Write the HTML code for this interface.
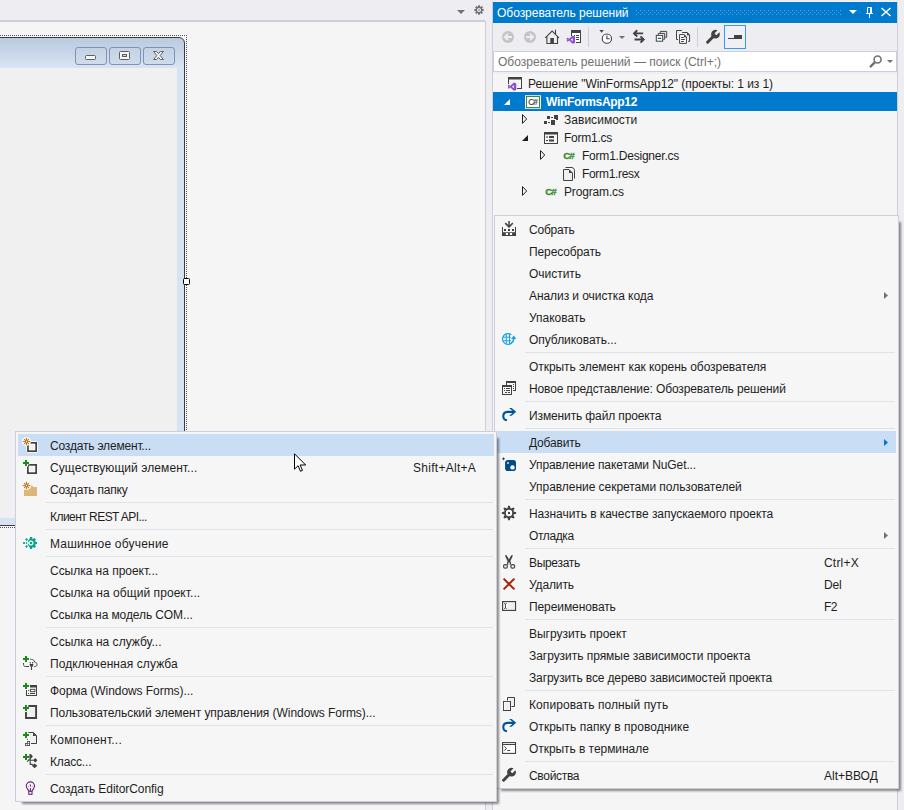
<!DOCTYPE html>
<html><head><meta charset="utf-8"><title>VS</title><style>
html,body{margin:0;padding:0}
body{width:904px;height:810px;overflow:hidden;background:#EEEEF2;position:relative;font-family:"Liberation Sans",sans-serif;font-size:12px;color:#1E1E1E}
.a{position:absolute}
.ic{position:absolute;overflow:visible}
.menu{position:absolute;box-sizing:border-box;background:#F6F6F6;border:1px solid #CCCEDB;}
.sh{position:absolute;background:rgba(0,0,0,.44);filter:blur(.8px)}
.menu>*{margin-left:-1px;margin-top:-1px}
.mi{position:absolute;height:22px;line-height:22px;white-space:nowrap}
.hl{position:absolute;height:22px;background:#C9DEF5}
.sep{position:absolute;height:1px;background:#E0E3E6}
.t,.tb{display:inline-block;white-space:nowrap}
.tb{font-weight:bold}
</style></head><body>
<!-- document well -->
<div class="a" style="left:0;top:20px;width:485px;height:2px;background:#CCCEDB"></div>
<div class="a" style="left:0;top:22px;width:485px;height:788px;background:#F5F5F5"></div>
<div class="a" style="left:485px;top:21px;width:1px;height:789px;background:#CCCEDB"></div>
<svg class="ic" style="left:457px;top:10px" width="8" height="4" viewBox="0 0 8 4"><path fill="#717171" d="M0 0h8L4 4z"/></svg>
<svg class="ic" style="left:474px;top:5px" width="10" height="10" viewBox="0 0 16 16"><path fill="#717171" d="M6.25 2.89L6.51 0.55L9.49 0.55L9.75 2.89L10.38 3.15L12.22 1.68L14.32 3.78L12.85 5.62L13.11 6.25L15.45 6.51L15.45 9.49L13.11 9.75L12.85 10.38L14.32 12.22L12.22 14.32L10.38 12.85L9.75 13.11L9.49 15.45L6.51 15.45L6.25 13.11L5.62 12.85L3.78 14.32L1.68 12.22L3.15 10.38L2.89 9.75L0.55 9.49L0.55 6.51L2.89 6.25L3.15 5.62L1.68 3.78L3.78 1.68L5.62 3.15z"/><circle cx="8" cy="8" r="3.300" fill="#EEEEF2"/><circle cx="8" cy="8" r="1.300" fill="#717171"/></svg>
<!-- designer form -->
<div class="a" style="left:-10px;top:35px;width:197px;height:493px;border:1px dotted #555;box-sizing:border-box"></div>
<div class="a" style="left:-10px;top:37px;width:195px;height:489px;box-sizing:border-box;border:1px solid #3C3C3C;border-radius:6px 6px 1px 1px;background:linear-gradient(#BACBDF 0,#C7D6E8 14px,#D9E5F4 30px,#D7E3F3 31px)"></div>
<div class="a" style="left:-10px;top:68px;width:187px;height:450px;background:#F0F0F0"></div>
<div class="a btn" style="left:75px;top:47px"></div><div class="a btn" style="left:109px;top:47px"></div><div class="a btn" style="left:143px;top:47px"></div>
<style>.btn{width:32px;height:18px;box-sizing:border-box;border:1px solid #8391AE;border-radius:3px;background:linear-gradient(#C3D2E5,#CFDCEC)}</style>
<div class="a" style="left:85px;top:55px;width:11px;height:5px;box-sizing:border-box;border:1px solid #5E5E5E;background:#F6F6F6;border-radius:1.500px"></div>
<div class="a" style="left:119px;top:51px;width:11px;height:9px;box-sizing:border-box;border:1px solid #5E5E5E;background:#F6F6F6;border-radius:1.500px"></div>
<div class="a" style="left:122px;top:54px;width:5px;height:3px;box-sizing:border-box;border:1px solid #5E5E5E;background:#C9D6E6"></div>
<svg class="ic" style="left:153px;top:51px" width="11" height="9" viewBox="0 0 11 9"><path fill="#F6F6F6" stroke="#5E5E5E" stroke-width="1" stroke-linejoin="round" d="M.6 .5H3.600L5.500 2.700 7.400 .5H10.400L7.200 4.500 10.400 8.500H7.400L5.500 6.300 3.600 8.500H.6L3.800 4.500z"/></svg>
<div class="a" style="left:183px;top:278px;width:7px;height:7px;box-sizing:border-box;border:1px solid #000;background:#fff;border-radius:1.500px"></div>
<!-- solution explorer -->
<div class="a" style="left:492px;top:1px;width:406px;height:809px;background:#F5F5F5;border-left:1px solid #CCCEDB;border-right:1px solid #CCCEDB;box-sizing:border-box"></div>
<div class="a" style="left:493px;top:23px;width:404px;height:51px;background:#EEEEF2"></div>
<div class="a" style="left:493px;top:2px;width:404px;height:21px;background:#007ACC"></div>
<svg class="ic" style="left:0;top:0" width="904" height="24" viewBox="0 0 904 24"><path fill="#59A8DE" d="M636 10h1v1h-1zM640 10h1v1h-1zM644 10h1v1h-1zM648 10h1v1h-1zM652 10h1v1h-1zM656 10h1v1h-1zM660 10h1v1h-1zM664 10h1v1h-1zM668 10h1v1h-1zM672 10h1v1h-1zM676 10h1v1h-1zM680 10h1v1h-1zM684 10h1v1h-1zM688 10h1v1h-1zM692 10h1v1h-1zM696 10h1v1h-1zM700 10h1v1h-1zM704 10h1v1h-1zM708 10h1v1h-1zM712 10h1v1h-1zM716 10h1v1h-1zM720 10h1v1h-1zM724 10h1v1h-1zM728 10h1v1h-1zM732 10h1v1h-1zM736 10h1v1h-1zM740 10h1v1h-1zM744 10h1v1h-1zM748 10h1v1h-1zM752 10h1v1h-1zM756 10h1v1h-1zM760 10h1v1h-1zM764 10h1v1h-1zM768 10h1v1h-1zM772 10h1v1h-1zM776 10h1v1h-1zM780 10h1v1h-1zM784 10h1v1h-1zM788 10h1v1h-1zM792 10h1v1h-1zM796 10h1v1h-1zM800 10h1v1h-1zM804 10h1v1h-1zM808 10h1v1h-1zM812 10h1v1h-1zM816 10h1v1h-1zM820 10h1v1h-1zM824 10h1v1h-1zM828 10h1v1h-1zM832 10h1v1h-1zM836 10h1v1h-1zM840 10h1v1h-1zM638 12h1v1h-1zM642 12h1v1h-1zM646 12h1v1h-1zM650 12h1v1h-1zM654 12h1v1h-1zM658 12h1v1h-1zM662 12h1v1h-1zM666 12h1v1h-1zM670 12h1v1h-1zM674 12h1v1h-1zM678 12h1v1h-1zM682 12h1v1h-1zM686 12h1v1h-1zM690 12h1v1h-1zM694 12h1v1h-1zM698 12h1v1h-1zM702 12h1v1h-1zM706 12h1v1h-1zM710 12h1v1h-1zM714 12h1v1h-1zM718 12h1v1h-1zM722 12h1v1h-1zM726 12h1v1h-1zM730 12h1v1h-1zM734 12h1v1h-1zM738 12h1v1h-1zM742 12h1v1h-1zM746 12h1v1h-1zM750 12h1v1h-1zM754 12h1v1h-1zM758 12h1v1h-1zM762 12h1v1h-1zM766 12h1v1h-1zM770 12h1v1h-1zM774 12h1v1h-1zM778 12h1v1h-1zM782 12h1v1h-1zM786 12h1v1h-1zM790 12h1v1h-1zM794 12h1v1h-1zM798 12h1v1h-1zM802 12h1v1h-1zM806 12h1v1h-1zM810 12h1v1h-1zM814 12h1v1h-1zM818 12h1v1h-1zM822 12h1v1h-1zM826 12h1v1h-1zM830 12h1v1h-1zM834 12h1v1h-1zM838 12h1v1h-1zM636 14h1v1h-1zM640 14h1v1h-1zM644 14h1v1h-1zM648 14h1v1h-1zM652 14h1v1h-1zM656 14h1v1h-1zM660 14h1v1h-1zM664 14h1v1h-1zM668 14h1v1h-1zM672 14h1v1h-1zM676 14h1v1h-1zM680 14h1v1h-1zM684 14h1v1h-1zM688 14h1v1h-1zM692 14h1v1h-1zM696 14h1v1h-1zM700 14h1v1h-1zM704 14h1v1h-1zM708 14h1v1h-1zM712 14h1v1h-1zM716 14h1v1h-1zM720 14h1v1h-1zM724 14h1v1h-1zM728 14h1v1h-1zM732 14h1v1h-1zM736 14h1v1h-1zM740 14h1v1h-1zM744 14h1v1h-1zM748 14h1v1h-1zM752 14h1v1h-1zM756 14h1v1h-1zM760 14h1v1h-1zM764 14h1v1h-1zM768 14h1v1h-1zM772 14h1v1h-1zM776 14h1v1h-1zM780 14h1v1h-1zM784 14h1v1h-1zM788 14h1v1h-1zM792 14h1v1h-1zM796 14h1v1h-1zM800 14h1v1h-1zM804 14h1v1h-1zM808 14h1v1h-1zM812 14h1v1h-1zM816 14h1v1h-1zM820 14h1v1h-1zM824 14h1v1h-1zM828 14h1v1h-1zM832 14h1v1h-1zM836 14h1v1h-1zM840 14h1v1h-1z"/></svg>
<div class="mi" style="left:497px;top:3px;height:21px;line-height:21px;color:#fff"><span class="t" style="letter-spacing:-0.032px;">Обозреватель решений</span></div>
<svg class="ic" style="left:849px;top:10px" width="8" height="4" viewBox="0 0 8 4"><path fill="#fff" d="M0 0h8L4 4z"/></svg>
<svg class="ic" style="left:866px;top:7px" width="7" height="11" viewBox="0 0 7 11"><path fill="none" stroke="#fff" d="M1.500 6.500v-6h4v6M0 6.500h7M3.500 7v4"/><path stroke="#fff" d="M4.500 .5v6"/></svg>
<svg class="ic" style="left:881px;top:8px" width="10" height="8" viewBox="0 0 10 8"><path fill="none" stroke="#fff" stroke-width="1.500" d="M.5 0l9 8M9.500 0l-9 8"/></svg>
<svg class="ic" style="left:500px;top:29px" width="16" height="16" viewBox="0 0 16 16"><circle cx="8" cy="8" r="6" fill="#C4C4C4"/><path fill="none" stroke="#EEEEF2" stroke-width="1.900" d="M8 4.800L4.800 8l3.200 3.200M5.200 8H12"/></svg><svg class="ic" style="left:522px;top:29px" width="16" height="16" viewBox="0 0 16 16"><circle cx="8" cy="8" r="6" fill="#C4C4C4"/><path fill="none" stroke="#EEEEF2" stroke-width="1.900" d="M8 4.800L11.200 8l-3.200 3.200M10.800 8H4"/></svg><svg class="ic" style="left:544px;top:29px" width="16" height="16" viewBox="0 0 16 16"><path fill="none" stroke="#424242" stroke-width="1.100" d="M1.300 8.900L8.100 2l6.900 6.900M2.900 7.800v6.700H13.500V7.800M11.500 5V.8"/><rect x="6.300" y="9" width="3.600" height="5.500" fill="#424242"/></svg><svg class="ic" style="left:566px;top:30px" width="16" height="16" viewBox="0 0 16 16"><path fill="#fff" d="M6 1h9v12H6z"/><path fill="#424242" d="M5 0h10v13h-5v-1h4V3H6v3H5z"/><g fill="#424242"><rect x="8" y="5" width="1" height="1"/><rect x="10" y="5" width="3" height="1"/><rect x="8" y="7" width="1" height="1"/><rect x="10" y="7" width="3" height="1"/><rect x="10" y="9" width="3" height="1"/></g><path transform="translate(0.2,5) scale(0.59)" fill="#8A4DD1" fill-rule="evenodd" d="M11 1L15 2.500V13.500L11 15 5 9.500 2.500 11.500 1 10.800V5.200L2.500 4.500 5 6.500zM11 5.200L7.700 8 11 10.800zM2.600 6.600V9.400L4 8z"/></svg><div style="position:absolute;left:588px;top:27px;width:1px;height:20px;background:#CCCEDB"></div><svg class="ic" style="left:597px;top:29px" width="16" height="16" viewBox="0 0 16 16"><path fill="#424242" d="M2.400 1.100h4.400L4.600 3.800z"/><circle cx="9.900" cy="9.650" r="4.650" fill="#fff" stroke="#424242" stroke-width="1.100"/><path fill="none" stroke="#424242" stroke-width="1.100" d="M9.900 6.500v3.300h2.800"/></svg><svg class="ic" style="left:619px;top:36px" width="6" height="3" viewBox="0 0 6 3"><path fill="#717171" d="M0 0h6L3 3z"/></svg><svg class="ic" style="left:631px;top:29px" width="16" height="16" viewBox="0 0 16 16"><path fill="none" stroke="#424242" stroke-width="1.900" d="M12.200 4.400H3.800M6.200 1.300L3 4.400l3.200 3.100M3.500 10.500h8.400M9.500 7.400l3.200 3.100-3.200 3.100"/></svg><svg class="ic" style="left:653px;top:29px" width="16" height="16" viewBox="0 0 16 16"><path fill="none" stroke="#424242" d="M7.300 3.900V2.400H13.700V8.200H12.200M5.300 5.900V4.400H11.700V10.200H10.200"/><rect x="3.300" y="6.400" width="6.400" height="5.800" fill="#fff" stroke="#424242"/><rect x="4.800" y="8.800" width="3.400" height="1.100" fill="#00539C"/></svg><svg class="ic" style="left:675px;top:29px" width="16" height="16" viewBox="0 0 16 16"><path fill="none" stroke="#424242" d="M6.800 1.500H1.500v9H3M7.100 3.500H12.300L14.600 6V12.400H13.100"/><path fill="#fff" stroke="#424242" d="M4.600 5.600H9.300L11.400 7.900V14.400H4.600z"/><path fill="#424242" d="M6.100 8h2.800v1H6.100zM6.100 10h3.700v1H6.100zM6.100 12h2.800v1H6.100zM9 5.400V8.200h2.800zM12 3.300V6.200h2.800z"/></svg><div style="position:absolute;left:697px;top:27px;width:1px;height:20px;background:#CCCEDB"></div><svg class="ic" style="left:705px;top:29px" width="16" height="16" viewBox="0 0 16 16"><path fill="#424242" d="M12.550 1.310A4.400 4.400 0 1 0 14.390 3.150L11.280 6.260 9.440 4.420z"/><path stroke="#424242" stroke-width="3" stroke-linecap="round" d="M8.500 7.200L2.600 13.200"/></svg><div style="position:absolute;left:724px;top:25px;width:20px;height:22px;border:1px solid #3399FF;background:#F0F0F4"></div><svg class="ic" style="left:727px;top:29px" width="16" height="16" viewBox="0 0 16 16"><path fill="#424242" d="M1 9h6V6h8v4H1z"/></svg>
<div class="a" style="left:493px;top:51px;width:404px;height:21px;box-sizing:border-box;border:1px solid #CCCEDB;background:#fff"></div>
<div class="mi" style="left:498px;top:52px;height:21px;line-height:21px;color:#717171"><span class="t" style="letter-spacing:0.022px;">Обозреватель решений — поиск (Ctrl+;)</span></div>
<svg class="ic" style="left:868px;top:54px" width="14" height="14" viewBox="0 0 14 14"><circle cx="9.600" cy="5.500" r="3.500" fill="none" stroke="#717171" stroke-width="1.600"/><path stroke="#717171" stroke-width="2.300" d="M7 8.100L2 13.100"/></svg>
<svg class="ic" style="left:887px;top:60px" width="6" height="3" viewBox="0 0 6 3"><path fill="#717171" d="M0 0h6L3 3z"/></svg>
<svg class="ic" style="left:508px;top:75px" width="16" height="16" viewBox="0 0 16 16"><path fill="#424242" d="M0 2h14v12H9v-1h4V4.500H1V9H0z"/><path transform="translate(-0.6,7) scale(0.59)" fill="#8A4DD1" fill-rule="evenodd" d="M11 1L15 2.500V13.500L11 15 5 9.500 2.500 11.500 1 10.800V5.200L2.500 4.500 5 6.500zM11 5.200L7.700 8 11 10.800zM2.600 6.600V9.400L4 8z"/></svg><div class="mi" style="top:73px;left:528px;color:#1E1E1E"><span class="t" style="letter-spacing:-0.070px;">Решение "WinFormsApp12" (проекты: 1 из 1)</span></div><div style="position:absolute;left:493px;top:92px;width:404px;height:19px;background:#007ACC"></div><svg class="ic" style="left:504px;top:99px" width="6" height="6" viewBox="0 0 6 6"><path fill="#fff" d="M6 0v6H0z"/></svg><svg class="ic" style="left:525px;top:93px" width="16" height="16" viewBox="0 0 16 16"><rect x="0" y="2.200" width="16" height="13.600" fill="#F6F6F6"/><rect x="1.500" y="3.500" width="13" height="11" fill="#fff" stroke="#388A34"/><text x="8.100" y="12" font-family="Liberation Sans" font-size="8.300" text-anchor="middle" fill="#424242" stroke="#424242" stroke-width=".2" textLength="9.500">C#</text></svg><div class="mi" style="top:91px;left:546px;color:#fff"><span class="tb" style="letter-spacing:-0.325px;">WinFormsApp12</span></div><svg class="ic" style="left:522px;top:114px" width="6" height="10" viewBox="0 0 6 10"><path fill="none" stroke="#1E1E1E" stroke-width="1" d="M.5 .6L4.700 5 .5 9.400z"/></svg><svg class="ic" style="left:543px;top:111px" width="16" height="16" viewBox="0 0 16 16"><g fill="#424242"><rect x="11" y="4" width="4" height="4"/><rect x="13" y="8" width="2" height="1"/><rect x="4" y="5" width="3" height="3"/><rect x="8" y="6" width="2" height="1"/><rect x="8" y="9" width="4" height="5"/><rect x="1" y="10" width="3" height="3"/><rect x="5" y="11" width="2" height="1"/></g></svg><div class="mi" style="top:109px;left:564px;color:#1E1E1E"><span class="t" style="letter-spacing:0.030px;">Зависимости</span></div><svg class="ic" style="left:522px;top:135px" width="6" height="6" viewBox="0 0 6 6"><path fill="#1E1E1E" d="M6 0v6H0z"/></svg><svg class="ic" style="left:543px;top:129px" width="16" height="16" viewBox="0 0 16 16"><path fill="#424242" d="M1 3h14v12H1zm1 2.500v8.500h12V5.500z"/><g fill="#424242"><rect x="3" y="7.500" width="2" height="1"/><rect x="6" y="7" width="5" height="2"/><rect x="3" y="11" width="2" height="1"/><rect x="6" y="10.500" width="5" height="2"/></g></svg><div class="mi" style="top:127px;left:564px;color:#1E1E1E"><span class="t" style="letter-spacing:-0.257px;">Form1.cs</span></div><svg class="ic" style="left:540px;top:150px" width="6" height="10" viewBox="0 0 6 10"><path fill="none" stroke="#1E1E1E" stroke-width="1" d="M.5 .6L4.700 5 .5 9.400z"/></svg><svg class="ic" style="left:561px;top:147px" width="16" height="16" viewBox="0 0 16 16"><text x="8" y="12.100" font-family="Liberation Sans" font-size="9.800" font-weight="bold" text-anchor="middle" fill="#388A34" stroke="#388A34" stroke-width=".3" textLength="11.500">C#</text></svg><div class="mi" style="top:145px;left:582px;color:#1E1E1E"><span class="t" style="letter-spacing:-0.212px;">Form1.Designer.cs</span></div><svg class="ic" style="left:561px;top:165px" width="16" height="16" viewBox="0 0 16 16"><path fill="none" stroke="#424242" d="M4.500 2.500h6.500q2.500 .5 2.500 3V13.500"/><path fill="#F0EFF1" stroke="#424242" d="M2.500 4.500h5.500L11.500 8v7.500h-9z"/><path fill="#424242" d="M8 4.500V8h3.500z"/></svg><div class="mi" style="top:163px;left:582px;color:#1E1E1E"><span class="t" style="letter-spacing:-0.322px;">Form1.resx</span></div><svg class="ic" style="left:522px;top:186px" width="6" height="10" viewBox="0 0 6 10"><path fill="none" stroke="#1E1E1E" stroke-width="1" d="M.5 .6L4.700 5 .5 9.400z"/></svg><svg class="ic" style="left:543px;top:183px" width="16" height="16" viewBox="0 0 16 16"><text x="8" y="12.100" font-family="Liberation Sans" font-size="9.800" font-weight="bold" text-anchor="middle" fill="#388A34" stroke="#388A34" stroke-width=".3" textLength="11.500">C#</text></svg><div class="mi" style="top:181px;left:564px;color:#1E1E1E"><span class="t" style="letter-spacing:-0.156px;">Program.cs</span></div>
<!-- menus -->
<div class="sh" style="left:501px;top:222px;width:400.1px;height:569.1px"></div><div class="menu" style="left:494px;top:215px;width:405px;height:574px"><svg class="ic" style="left:7px;top:6px" width="16" height="16" viewBox="0 0 16 16"><g fill="#424242"><path d="M7.3 0h1.5v4.1l2.5-2.5 1 1.1L8 7 3.7 2.7l1-1.1 2.6 2.5z"/><path d="M1 6h1v5.3h12V6h1v9H1z"/><rect x="3" y="8" width="2" height="2"/><rect x="7" y="8" width="2" height="2"/><rect x="11" y="8" width="2" height="2"/></g><rect x="4.8" y="12" width="2.2" height="2" fill="#fff"/><rect x="8.9" y="12" width="2.2" height="2" fill="#fff"/></svg><div class="mi" style="top:4px;left:35px"><span class="t" style="letter-spacing:-0.217px;">Собрать</span></div><div class="mi" style="top:26px;left:35px"><span class="t" style="letter-spacing:-0.110px;">Пересобрать</span></div><div class="mi" style="top:48px;left:35px"><span class="t" style="letter-spacing:-0.029px;">Очистить</span></div><div class="mi" style="top:70px;left:35px"><span class="t" style="letter-spacing:-0.070px;">Анализ и очистка кода</span></div><svg class="ic" style="left:390px;top:77px" width="4" height="7" viewBox="0 0 4 7"><path fill="#717171" d="M0 0l4 3.500-4 3.500z"/></svg><div class="mi" style="top:92px;left:35px"><span class="t" style="letter-spacing:-0.013px;">Упаковать</span></div><svg class="ic" style="left:7px;top:116px" width="16" height="16" viewBox="0 0 16 16"><g fill="none" stroke="#1BA1E2"><path stroke-width="1.200" d="M10.300 3.800A5.400 5.400 0 1 0 10.600 12"/><path stroke-width="1" d="M5.300 3.200v9.600M8.500 3.200v9.600M1.800 6.200h8M1.800 9.800h8.200"/><path stroke-width="1.500" d="M12.700 7.500c0 2.200-.9 3.900-2.700 4.900"/></g><path fill="#1BA1E2" d="M12.800 4.500l2.600 3.600h-5.400z"/></svg><div class="mi" style="top:114px;left:35px"><span class="t" style="letter-spacing:-0.043px;">Опубликовать...</span></div><div class="sep" style="top:137px;left:31px;width:370px"></div><div class="mi" style="top:141px;left:35px"><span class="t" style="letter-spacing:-0.058px;">Открыть элемент как корень обозревателя</span></div><svg class="ic" style="left:7px;top:165px" width="16" height="16" viewBox="0 0 16 16"><g fill="#424242"><path d="M5 1h10v10h-3v-1h2V3H6v2H5z"/><path d="M1 5h10v10H1zm1 2v7h8V7z"/><rect x="3" y="8" width="1" height="1"/><rect x="5" y="8" width="4" height="1"/><rect x="3" y="10" width="1" height="1"/><rect x="5" y="10" width="4" height="1"/><rect x="4" y="12" width="2" height="1"/><rect x="7" y="12" width="2" height="1"/><rect x="12" y="4" width="1" height="1"/><rect x="12" y="6" width="1" height="1"/><rect x="12" y="8" width="1" height="1"/></g></svg><div class="mi" style="top:163px;left:35px"><span class="t" style="letter-spacing:-0.115px;">Новое представление: Обозреватель решений</span></div><div class="sep" style="top:186px;left:31px;width:370px"></div><svg class="ic" style="left:7px;top:192px" width="16" height="16" viewBox="0 0 16 16"><path fill="none" stroke="#00539C" stroke-width="2.100" d="M6 13.300A4.250 4.250 0 0 1 6.200 4.850H12"/><path fill="#00539C" d="M8.100 1h2.500L15.200 4.850 10.600 8.700H8.100L11.500 5.900v-2.100z"/></svg><div class="mi" style="top:190px;left:35px"><span class="t" style="letter-spacing:-0.125px;">Изменить файл проекта</span></div><div class="sep" style="top:213px;left:31px;width:370px"></div><div class="hl" style="top:216px;left:3px;width:399px"></div><div class="mi" style="top:217px;left:35px"><span class="t" style="letter-spacing:-0.171px;">Добавить</span></div><svg class="ic" style="left:390px;top:224px" width="4" height="7" viewBox="0 0 4 7"><path fill="#007ACC" d="M0 0l4 3.500-4 3.500z"/></svg><svg class="ic" style="left:7px;top:241px" width="16" height="16" viewBox="0 0 16 16"><rect x="4.100" y="4.100" width="10.900" height="10.900" rx="2.800" fill="#004A85"/><rect x="6" y="6" width="2" height="2" fill="#9CB9D6"/><circle cx="11.500" cy="11.400" r="2.200" fill="#fff"/><path fill="#004A85" d="M2.500 1L3.100 2.200 4.300 2.800 3.100 3.400 2.500 4.600 1.900 3.400.7 2.800 1.900 2.200z"/></svg><div class="mi" style="top:239px;left:35px"><span class="t" style="letter-spacing:-0.100px;">Управление пакетами NuGet...</span></div><div class="mi" style="top:261px;left:35px"><span class="t" style="letter-spacing:-0.042px;">Управление секретами пользователей</span></div><div class="sep" style="top:284px;left:31px;width:370px"></div><svg class="ic" style="left:7px;top:290px" width="16" height="16" viewBox="0 0 16 16"><path fill="#424242" d="M6.41 3.36L7.24 0.84L8.76 0.84L9.59 3.36L10.16 3.60L12.52 2.40L13.60 3.48L12.40 5.84L12.64 6.41L15.16 7.24L15.16 8.76L12.64 9.59L12.40 10.16L13.60 12.52L12.52 13.60L10.16 12.40L9.59 12.64L8.76 15.16L7.24 15.16L6.41 12.64L5.84 12.40L3.48 13.60L2.40 12.52L3.60 10.16L3.36 9.59L0.84 8.76L0.84 7.24L3.36 6.41L3.60 5.84L2.40 3.48L3.48 2.40L5.84 3.60z"/><circle cx="8" cy="8" r="3.200" fill="#fff"/><circle cx="8" cy="8" r="1.200" fill="#424242"/></svg><div class="mi" style="top:288px;left:35px"><span class="t" style="letter-spacing:-0.057px;">Назначить в качестве запускаемого проекта</span></div><div class="mi" style="top:310px;left:35px"><span class="t" style="letter-spacing:-0.383px;">Отладка</span></div><svg class="ic" style="left:390px;top:317px" width="4" height="7" viewBox="0 0 4 7"><path fill="#717171" d="M0 0l4 3.500-4 3.500z"/></svg><div class="sep" style="top:333px;left:31px;width:370px"></div><svg class="ic" style="left:7px;top:339px" width="16" height="16" viewBox="0 0 16 16"><path fill="#424242" d="M4.10 1.00L5.30 1.00L6.80 3.30L8.20 6.00L8.80 7.90L7.00 7.90L6.00 6.00L4.70 3.30z"/><path fill="#424242" d="M11.80 1.00L10.60 1.00L9.10 3.30L7.70 6.00L7.10 7.90L8.90 7.90L9.90 6.00L11.20 3.30z"/><path fill="#424242" fill-rule="evenodd" d="M6.100 7.500H9.900V10.800H6.100zM7.300 8.400V10.800H8.700V8.400z"/><g fill="none" stroke="#424242" stroke-width="1.200"><rect x="2.600" y="10.600" width="3.700" height="3.600" rx="1.500"/><rect x="9.900" y="10.600" width="3.700" height="3.600" rx="1.500"/></g></svg><div class="mi" style="top:337px;left:35px"><span class="t" style="letter-spacing:-0.314px;">Вырезать</span></div><div class="mi" style="top:337px;left:330px"><span class="t" style="letter-spacing:0.200px;">Ctrl+X</span></div><svg class="ic" style="left:7px;top:361px" width="16" height="16" viewBox="0 0 16 16"><path fill="none" stroke="#A1260D" stroke-width="2" d="M2.600 2.600l10.800 10.800M13.400 2.600L2.600 13.400"/></svg><div class="mi" style="top:359px;left:35px"><span class="t" style="letter-spacing:-0.133px;">Удалить</span></div><div class="mi" style="top:359px;left:330px"><span class="t" style="letter-spacing:-0.150px;">Del</span></div><svg class="ic" style="left:7px;top:383px" width="16" height="16" viewBox="0 0 16 16"><rect x="1.600" y="3.600" width="12.900" height="8.800" fill="#fff" stroke="#424242" stroke-width="1.200"/><rect x="6.500" y="5" width="6.500" height="6" fill="#F0EFF1"/><path fill="none" stroke="#424242" stroke-width="1" d="M3.200 5.300l1.200.8 1.200-.8M4.400 6v4M3.200 10.700l1.200-.8 1.200.8"/></svg><div class="mi" style="top:381px;left:35px"><span class="t" style="letter-spacing:-0.092px;">Переименовать</span></div><div class="mi" style="top:381px;left:330px"><span class="t" style="letter-spacing:-0.700px;">F2</span></div><div class="sep" style="top:404px;left:31px;width:370px"></div><div class="mi" style="top:408px;left:35px"><span class="t" style="letter-spacing:-0.027px;">Выгрузить проект</span></div><div class="mi" style="top:430px;left:35px"><span class="t" style="letter-spacing:-0.043px;">Загрузить прямые зависимости проекта</span></div><div class="mi" style="top:452px;left:35px"><span class="t" style="letter-spacing:-0.135px;">Загрузить все дерево зависимостей проекта</span></div><div class="sep" style="top:475px;left:31px;width:370px"></div><svg class="ic" style="left:7px;top:481px" width="16" height="16" viewBox="0 0 16 16"><path fill="#F0EFF1" stroke="#424242" d="M6.500 4.500v-3h7v9h-3"/><rect x="2.500" y="5.500" width="7" height="9" fill="#F0EFF1" stroke="#424242"/><path fill="none" stroke="#fff" stroke-width=".8" d="M3.400 13.600v-7.200h5.200"/></svg><div class="mi" style="top:479px;left:35px"><span class="t" style="letter-spacing:0.086px;">Копировать полный путь</span></div><svg class="ic" style="left:7px;top:503px" width="16" height="16" viewBox="0 0 16 16"><path fill="none" stroke="#00539C" stroke-width="2.100" d="M6 13.300A4.250 4.250 0 0 1 6.200 4.850H12"/><path fill="#00539C" d="M8.100 1h2.500L15.200 4.850 10.600 8.700H8.100L11.500 5.900v-2.100z"/></svg><div class="mi" style="top:501px;left:35px"><span class="t" style="letter-spacing:0.028px;">Открыть папку в проводнике</span></div><svg class="ic" style="left:7px;top:525px" width="16" height="16" viewBox="0 0 16 16"><rect x="1.600" y="2.600" width="12.900" height="10.800" fill="#fff" stroke="#424242" stroke-width="1.100"/><path stroke="#424242" stroke-width="1" d="M1.600 4.500h12.900"/><path fill="none" stroke="#424242" stroke-width="1" d="M3.300 6.500l2.300 2-2.300 2M6.200 10.500h3"/></svg><div class="mi" style="top:523px;left:35px"><span class="t" style="letter-spacing:-0.056px;">Открыть в терминале</span></div><div class="sep" style="top:546px;left:31px;width:370px"></div><svg class="ic" style="left:7px;top:552px" width="16" height="16" viewBox="0 0 16 16"><path fill="#424242" d="M12.550 1.310A4.400 4.400 0 1 0 14.390 3.150L11.280 6.260 9.440 4.420z"/><path stroke="#424242" stroke-width="3" stroke-linecap="round" d="M8.500 7.200L2.600 13.200"/></svg><div class="mi" style="top:550px;left:35px"><span class="t" style="letter-spacing:-0.314px;">Свойства</span></div><div class="mi" style="top:550px;left:330px"><span class="t" style="letter-spacing:0.000px;">Alt+ВВОД</span></div></div>
<div class="sh" style="left:22px;top:438px;width:477.1px;height:366.1px"></div><div class="menu" style="left:15px;top:431px;width:482px;height:371px"><div class="hl" style="top:3px;left:3px;width:476px"></div><svg class="ic" style="left:7px;top:6px" width="16" height="16" viewBox="0 0 16 16"><path fill="none" stroke="#F6F6F6" stroke-width="3.800" stroke-linejoin="round" d="M6 7.500V14.100h8.100V5.900H8.300"/><circle cx="4.500" cy="4.500" r="4.600" fill="#F6F6F6"/><path fill="#F0EFF1" stroke="#424242" stroke-width="1.800" d="M6 7.500V14.100h8.100V5.900H8.300"/><path fill="none" stroke="#FBFBFB" stroke-width=".8" d="M7.300 7.300h5.400v5.400H7.300z"/><circle cx="4.500" cy="4.500" r="4.300" fill="#F6F6F6"/><g stroke="#C27D1A" stroke-width="1.1" stroke-linecap="round"><path d="M4.5 1.2v6.6M1.2 4.5h6.6M2.4 2.4l4.2 4.2M6.6 2.4L2.4 6.6"/></g><circle cx="4.5" cy="4.5" r="1.5" fill="#C27D1A"/><circle cx="4.5" cy="4.5" r=".65" fill="#fff"/></svg><div class="mi" style="top:4px;left:35px"><span class="t" style="letter-spacing:-0.188px;">Создать элемент...</span></div><svg class="ic" style="left:7px;top:28px" width="16" height="16" viewBox="0 0 16 16"><rect x="5.900" y="5.900" width="8.200" height="8.200" fill="#F0EFF1" stroke="#424242" stroke-width="1.800"/><path fill="none" stroke="#FBFBFB" stroke-width=".8" d="M7.300 7.300h5.400v5.400H7.300z"/><path fill="#F6F6F6" d="M0 0h7.500v5.500h-1.500v2H0z"/><path fill="#1B8A1B" d="M3 1h2v2h2v2H5v2H3V5H1V3h2z"/></svg><div class="mi" style="top:26px;left:35px"><span class="t" style="letter-spacing:0.077px;">Существующий элемент...</span></div><div class="mi" style="top:26px;left:398px"><span class="t" style="letter-spacing:0.280px;">Shift+Alt+A</span></div><svg class="ic" style="left:7px;top:50px" width="16" height="16" viewBox="0 0 16 16"><path fill="#DCB67A" d="M2 15V4.500h8.200l1 1.500H15v9z"/><circle cx="4.500" cy="4.500" r="4.600" fill="#F6F6F6"/><g stroke="#C27D1A" stroke-width="1.1" stroke-linecap="round"><path d="M4.5 1.2v6.6M1.2 4.5h6.6M2.4 2.4l4.2 4.2M6.6 2.4L2.4 6.6"/></g><circle cx="4.5" cy="4.5" r="1.5" fill="#C27D1A"/><circle cx="4.5" cy="4.5" r=".65" fill="#fff"/></svg><div class="mi" style="top:48px;left:35px"><span class="t" style="letter-spacing:-0.192px;">Создать папку</span></div><div class="sep" style="top:71px;left:31px;width:447px"></div><div class="mi" style="top:75px;left:35px"><span class="t" style="letter-spacing:-0.541px;">Клиент REST API...</span></div><div class="sep" style="top:98px;left:31px;width:447px"></div><svg class="ic" style="left:7px;top:104px" width="16" height="16" viewBox="0 0 16 16"><clipPath id="mlc"><path d="M7.300 0H16V16H7.300V11.500L5.600 9.700 7.300 8 5.600 6.300 7.300 4.500z"/></clipPath><g clip-path="url(#mlc)"><path fill="#00A88B" d="M7.57 3.84L7.93 2.00L10.07 2.00L10.43 3.84L10.94 4.05L12.49 2.99L14.01 4.51L12.95 6.06L13.16 6.57L15.00 6.93L15.00 9.07L13.16 9.43L12.95 9.94L14.01 11.49L12.49 13.01L10.94 11.95L10.43 12.16L10.07 14.00L7.93 14.00L7.57 12.16L7.06 11.95L5.51 13.01L3.99 11.49L5.05 9.94L4.84 9.43L3.00 9.07L3.00 6.93L4.84 6.57L5.05 6.06L3.99 4.51L5.51 2.99L7.06 4.05z"/></g><circle cx="9" cy="8" r="2.500" fill="#F6F6F6"/><rect x="8" y="7" width="2" height="2" fill="#00A88B"/><g fill="#00A88B"><rect x="1" y="7.100" width="2.100" height="1.800"/><rect x="4" y="7.100" width="1.100" height="1.800"/><path d="M4.550 3l1.450 1.500L4.550 6 3.100 4.500zM4.550 10l1.450 1.500L4.550 13 3.100 11.500z"/></g></svg><div class="mi" style="top:102px;left:35px"><span class="t" style="letter-spacing:0.200px;">Машинное обучение</span></div><div class="sep" style="top:125px;left:31px;width:447px"></div><div class="mi" style="top:129px;left:35px"><span class="t" style="letter-spacing:-0.028px;">Ссылка на проект...</span></div><div class="mi" style="top:151px;left:35px"><span class="t" style="letter-spacing:0.062px;">Ссылка на общий проект...</span></div><div class="mi" style="top:173px;left:35px"><span class="t" style="letter-spacing:-0.100px;">Ссылка на модель COM...</span></div><div class="sep" style="top:196px;left:31px;width:447px"></div><div class="mi" style="top:200px;left:35px"><span class="t" style="letter-spacing:0.017px;">Ссылка на службу...</span></div><svg class="ic" style="left:7px;top:224px" width="16" height="16" viewBox="0 0 16 16"><g fill="none" stroke="#424242" stroke-width="1"><path d="M1.500 8v1.500c0 1.200.8 2 2 2h3.500M12 11.500h.8c1.200 0 2.200-.8 2.200-2s-1-2.300-2.300-2.300c-.2-1.600-1.600-2.700-3.200-2.700-.6 0-1-.1-1.500-.7"/><path d="M8.300 7v1.500M10.700 7v1.500M9.500 11.500V15" stroke-width="1.100"/></g><path fill="#424242" d="M7.300 9h4.400l-.6.800v1.200l-.6.800H8.500l-.6-.8V9.800z"/><path fill="#1B8A1B" d="M3 1h2v2h2v2H5v2H3V5H1V3h2z"/></svg><div class="mi" style="top:222px;left:35px"><span class="t" style="letter-spacing:0.072px;">Подключенная служба</span></div><div class="sep" style="top:245px;left:31px;width:447px"></div><svg class="ic" style="left:7px;top:251px" width="16" height="16" viewBox="0 0 16 16"><path fill="#424242" d="M8 3h7v11H4V8h1v5h9V5.400H8z"/><rect x="8.400" y="7.300" width="4.500" height="2.400" fill="none" stroke="#424242" stroke-width=".9"/><rect x="6" y="8" width="1" height="1" fill="#424242"/><rect x="6" y="11" width="1" height="1" fill="#424242"/><rect x="8" y="11" width="5" height="1" fill="#424242"/><path fill="#1B8A1B" d="M3 1h2v2h2v2H5v2H3V5H1V3h2z"/></svg><div class="mi" style="top:249px;left:35px"><span class="t" style="letter-spacing:-0.061px;">Форма (Windows Forms)...</span></div><svg class="ic" style="left:7px;top:273px" width="16" height="16" viewBox="0 0 16 16"><path fill="#F0EFF1" d="M6 2h8v12H4V8h2z"/><path fill="none" stroke="#424242" stroke-width="1.900" d="M6.300 2h7.800v12H4V8"/><path fill="#1B8A1B" d="M3 1h2v2h2v2H5v2H3V5H1V3h2z"/></svg><div class="mi" style="top:271px;left:35px"><span class="t" style="letter-spacing:-0.055px;">Пользовательский элемент управления (Windows Forms)...</span></div><div class="sep" style="top:294px;left:31px;width:447px"></div><svg class="ic" style="left:7px;top:300px" width="16" height="16" viewBox="0 0 16 16"><path fill="#F0EFF1" d="M7 2h5l2 2v8H8V8z"/><path fill="none" stroke="#424242" stroke-width="1" d="M6.300 1.500H11.500L14.500 4.500V12.500H9"/><path fill="#424242" d="M11 1.500v3.500h3.500z"/><rect x="5" y="7.800" width="1" height="1" fill="#424242"/><path fill="#424242" d="M3 12h2v-2h3v5H3z"/><rect x="5.800" y="10.800" width="1.400" height="1.400" fill="#fff"/><rect x="3.800" y="12.800" width="1.400" height="1.400" fill="#fff"/><rect x="5.800" y="12.800" width="1.400" height="1.400" fill="#fff"/><path fill="#1B8A1B" d="M3 1h2v2h2v2H5v2H3V5H1V3h2z"/></svg><div class="mi" style="top:298px;left:35px"><span class="t" style="letter-spacing:0.236px;">Компонент...</span></div><svg class="ic" style="left:7px;top:322px" width="16" height="16" viewBox="0 0 16 16"><g fill="#424242"><path d="M7.400 1L9.200 1.200 10.900 3.600 9 5.500H7.400z"/><path d="M13.200 5.100L15.400 7.300 13.200 9.500 11 7.300z"/><path d="M12.600 10.400L15.400 12.800 12.600 15.200 9.800 12.800z"/></g><path fill="none" stroke="#424242" stroke-width="1.100" d="M5.200 8.700L6.800 6.900h1.400M8.200 5v6.400h2.600M8.200 7.300h3.200"/><path fill="#1B8A1B" d="M3 1h2v2h2v2H5v2H3V5H1V3h2z"/></svg><div class="mi" style="top:320px;left:35px"><span class="t" style="letter-spacing:-0.171px;">Класс...</span></div><div class="sep" style="top:343px;left:31px;width:447px"></div><svg class="ic" style="left:7px;top:349px" width="16" height="16" viewBox="0 0 16 16"><g fill="none" stroke="#68217A" stroke-width="1.100"><path d="M6.800 11.300C6.600 9.500 4.300 8.700 4.300 6A4.100 4.100 0 0 1 12.500 6c0 2.700-2.300 3.500-2.500 5.300"/><rect x="6.800" y="11.300" width="3.200" height="3" fill="#fff"/><path d="M8.400 8v3.300M8.400 4.500v2M6.400 6.300l.3.300M10.400 6.300l-.3.300"/></g></svg><div class="mi" style="top:347px;left:35px"><span class="t" style="letter-spacing:-0.074px;">Создать EditorConfig</span></div></div>
<svg class="ic" style="left:294px;top:453px" width="12" height="19" viewBox="0 0 12 19"><path fill="#fff" stroke="#000" stroke-width="1" d="M.5 .8V16.200l3.600-3.500 2.400 5.600 2-.9-2.400-5.400H11.700z"/></svg>
</body></html>
